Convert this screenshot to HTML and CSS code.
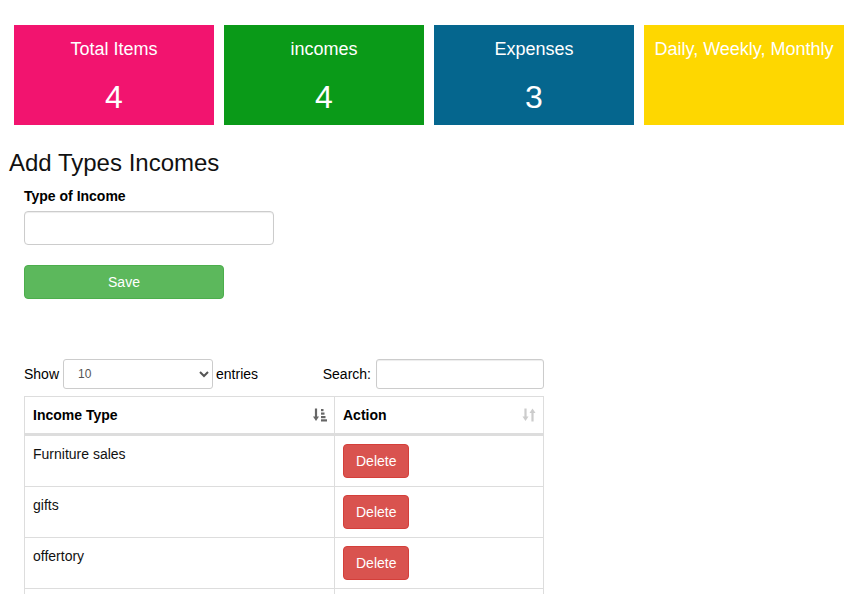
FILE: index.html
```html
<!DOCTYPE html>
<html>
<head>
<meta charset="utf-8">
<link rel="stylesheet" href="styles.css">
</head>
<body>
<div class="page">
  <div class="cards">
    <div class="card card-pink"><div class="card-title">Total Items</div><div class="card-num">4</div></div>
    <div class="card card-green"><div class="card-title">incomes</div><div class="card-num">4</div></div>
    <div class="card card-blue"><div class="card-title">Expenses</div><div class="card-num">3</div></div>
    <div class="card card-yellow"><div class="card-title">Daily, Weekly, Monthly</div></div>
  </div>

  <h3 class="heading">Add Types Incomes</h3>

  <form class="form">
    <label class="label">Type of Income</label>
    <input class="text-input" type="text">
    <button type="button" class="btn btn-save">Save</button>
  </form>

  <div class="dt">
    <div class="dt-controls">
      <div class="dt-length">
        <span>Show</span>
        <select class="dt-select"><option>10</option></select>
        <span>entries</span>
      </div>
      <div class="dt-filter">
        <span>Search:</span>
        <input class="dt-search" type="search">
      </div>
    </div>
    <table class="table">
      <thead>
        <tr>
          <th class="col-type sorting">Income Type
            <svg class="sort-icon active" width="14" height="14" viewBox="0 0 14 14"><path d="M3 0.5v9.5" stroke="currentColor" stroke-width="2.2" fill="none"/><path d="M0 8.5h6l-3 4.5z" fill="currentColor"/><rect x="8" y="1" width="2.5" height="2.2" fill="currentColor"/><rect x="8" y="4.5" width="3.5" height="2.2" fill="currentColor"/><rect x="8" y="8" width="4.5" height="2.2" fill="currentColor"/><rect x="8" y="11.3" width="6" height="2.2" fill="currentColor"/></svg>
          </th>
          <th class="col-action sorting">Action
            <svg class="sort-icon" width="14" height="14" viewBox="0 0 14 14"><path d="M3.5 0.5v9.5" stroke="currentColor" stroke-width="2.2" fill="none"/><path d="M0.5 8.5h6l-3 4.5z" fill="currentColor"/><path d="M10.5 4v9.5" stroke="currentColor" stroke-width="2.2" fill="none"/><path d="M7.5 5h6l-3-4.5z" fill="currentColor"/></svg>
          </th>
        </tr>
      </thead>
      <tbody>
        <tr><td>Furniture sales</td><td><button type="button" class="btn btn-delete">Delete</button></td></tr>
        <tr><td>gifts</td><td><button type="button" class="btn btn-delete">Delete</button></td></tr>
        <tr><td>offertory</td><td><button type="button" class="btn btn-delete">Delete</button></td></tr>
        <tr class="row-last"><td>tithes</td><td><button type="button" class="btn btn-delete">Delete</button></td></tr>
      </tbody>
    </table>
  </div>
</div>
</body>
</html>
```

FILE: styles.css
```css
* { box-sizing: border-box; }

body {
  margin: 0;
  font-family: "Liberation Sans", Arial, sans-serif;
  font-size: 14px;
  line-height: 20px;
  color: #333;
  background: #fff;
}

.page {
  padding: 25px 0 0 0;
}

.cards {
  display: flex;
  gap: 10px;
  padding-left: 14px;
}

.card {
  width: 200px;
  height: 100px;
  padding-top: 14px;
  text-align: center;
  color: #fff;
}

.card-pink { background: #f2146f; }
.card-green { background: #0a9a18; }
.card-blue { background: #05668e; }
.card-yellow { background: #fed700; }

.card-title {
  font-size: 18px;
  line-height: 20px;
}

.card-num {
  margin-top: 20px;
  font-size: 32px;
  line-height: 36px;
}

.heading {
  margin: 25px 0 10px 9px;
  font-size: 24px;
  font-weight: normal;
  line-height: 26.4px;
  color: #111;
}

.form {
  display: flex;
  flex-direction: column;
  align-items: flex-start;
  padding-left: 24px;
  margin: 0;
}

.label {
  display: block;
  font-weight: bold;
  color: #000;
  margin-bottom: 5px;
}

.text-input {
  width: 250px;
  height: 34px;
  border: 1px solid #ccc;
  border-radius: 4px;
  box-shadow: inset 0 1px 1px rgba(0,0,0,.075);
  margin: 0 0 20px 0;
  padding: 6px 12px;
  font: inherit;
}

.btn {
  font-family: inherit;
  font-size: 14px;
  line-height: 20px;
  color: #fff;
  border-radius: 4px;
  padding: 6px 12px;
  cursor: pointer;
}

.btn-save {
  width: 200px;
  height: 34px;
  background: #5cb85c;
  border: 1px solid #4cae4c;
}

.dt {
  margin-top: 60px;
  padding-left: 24px;
  width: 544px;
}

.dt-controls {
  display: flex;
  justify-content: space-between;
  align-items: center;
  height: 30px;
}

.dt-length, .dt-filter {
  display: flex;
  align-items: center;
  color: #000;
}

.dt-select {
  width: 150px;
  height: 30px;
  margin: 0 3px 0 4px;
  padding: 5px 10px;
  font-family: inherit;
  font-size: 12px;
  color: #555;
  border: 1px solid #ccc;
  border-radius: 3px;
  background: #fff;
}

.dt-search {
  width: 168px;
  height: 30px;
  margin-left: 5px;
  padding: 5px 10px;
  font: inherit;
  font-size: 12px;
  border: 1px solid #ccc;
  border-radius: 3px;
  box-shadow: inset 0 1px 1px rgba(0,0,0,.075);
}

.table {
  margin-top: 7px;
  width: 520px;
  border-collapse: collapse;
  border: 1px solid #ddd;
}

.table th, .table td {
  border: 1px solid #ddd;
  padding: 8px;
  text-align: left;
  line-height: 20px;
}

.table th {
  border-top: 0;
  border-bottom: 3px solid #ddd;
  vertical-align: bottom;
  color: #000;
  position: relative;
  padding-right: 30px;
}

.table td {
  vertical-align: top;
  color: #111;
}

.row-last td {
  padding-top: 12px;
}

.col-type { width: 310px; }

.sort-icon {
  position: absolute;
  right: 7px;
  top: 11px;
  color: #ccc;
}

.sort-icon.active {
  color: #666;
}

.btn-delete {
  background: #d9534f;
  border: 1px solid #d43f3a;
}
```
